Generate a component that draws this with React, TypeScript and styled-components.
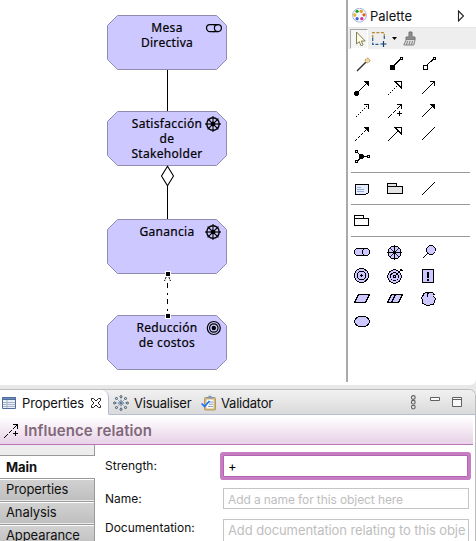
import React from "react";
import styled, { createGlobalStyle } from "styled-components";

const GlobalStyle = createGlobalStyle`
  * { box-sizing: border-box; }
  body { margin: 0; background: #e9e9e9; overflow: hidden; }
`;

const ui = `Inter, "Liberation Sans", sans-serif`;

const Window = styled.div`
  width: 476px;
  height: 541px;
  display: flex;
  flex-direction: column;
  overflow: hidden;
  background: #e8e8e8;
  font-family: ${ui};
  font-size: 13px;
  color: #111;
`;

const Editor = styled.section`
  height: 385px;
  flex: none;
  display: flex;
  background: #fff;
  border-bottom-right-radius: 6px;
`;

/* Diagram */

const Canvas = styled.div`
  position: relative;
  width: 346px;
  height: 385px;
`;

const Drawing = styled.svg`
  position: absolute;
  inset: 0;
`;

const NodeLabel = styled.div<{ $top: number }>`
  position: absolute;
  left: 107px;
  top: ${(p) => p.$top}px;
  width: 120px;
  text-align: center;
  white-space: pre-line;
  font-family: "Noto Sans", "Open Sans", sans-serif;
  font-size: 12px;
  line-height: 15px;
  letter-spacing: 0.32px;
  color: #000;
  -webkit-text-stroke: 0.2px #000;
`;

const LILAC = "#cdc8ff";

const NodeShape = ({ y }: { y: number }) => (
  <path
    d={`M117.5 ${y + 0.5}h99l10 10v34l-10 10h-99l-10-10v-34z`}
    fill={LILAC}
    stroke="#8f8cb2"
  />
);

const Wheel = ({ x, y }: { x: number; y: number }) => (
  <g transform={`translate(${x} ${y})`} stroke="#000" fill="none">
    <path d="M-8 0H8M0-8V8" strokeWidth="1.8" stroke="#55536a" />
    <circle r="6.2" strokeWidth="1.4" />
    <path d="M-5.4-5.4L5.4 5.4M5.4-5.4L-5.4 5.4" strokeWidth="1.2" />
    <circle r="1.9" fill="#000" />
  </g>
);

const Diagram = () => (
  <Canvas>
    <Drawing width="346" height="385">
      {[15, 111, 219, 315].map((y) => (
        <NodeShape key={y} y={y} />
      ))}
      <path d="M167.5 70V111M167.5 186V219" stroke="#000" />
      <path d="M167.5 166.3L173.5 176L167.5 185.7L161.5 176z" fill="#fff" stroke="#000" strokeWidth="1.1" />
      <path d="M167.5 283V315" stroke="#000" strokeDasharray="5 5 2 4" />
      <path d="M166.5 276L164.5 281M168.5 276L170.5 281" stroke="#000" strokeDasharray="3 1" />
      <path d="M165 271h6v6h-6zM165 313h6v6h-6z" fill="#fff" />
      <path d="M166 272h4v4h-4zM166 314h4v4h-4z" fill="#000" />
      <g fill="none" stroke="#000" strokeWidth="1.2">
        <path d="M214 24.6h-4a3.5 3.5 0 0 0 0 7h4" />
        <path d="M213 24.6h5M213 31.6h5" />
        <circle cx="217.9" cy="28.1" r="3.5" />
        <circle cx="213.8" cy="328" r="6.5" />
        <circle cx="213.8" cy="328" r="4.2" />
      </g>
      <circle cx="213.8" cy="328" r="2.2" />
      <Wheel x={213} y={124} />
      <Wheel x={213} y={232} />
    </Drawing>
    <NodeLabel $top={20}>{"Mesa\nDirectiva"}</NodeLabel>
    <NodeLabel $top={116}>{"Satisfacción\nde\nStakeholder"}</NodeLabel>
    <NodeLabel $top={224}>Ganancia</NodeLabel>
    <NodeLabel $top={320}>{"Reducción\nde costos"}</NodeLabel>
  </Canvas>
);

/* Palette */

const PalettePane = styled.aside`
  width: 130px;
  display: flex;
  flex-direction: column;
  height: 382px;
  border-left: 2px solid #aaa;
`;

const PaletteHeader = styled.header`
  height: 27px;
  flex: none;
  display: flex;
  align-items: center;
  padding: 4px 0 0 4px;
  font-size: 13px;
`;

const PaletteName = styled.span`
  flex: 1;
  padding-left: 3px;
`;

const PaletteArrow = styled.svg`
  flex: none;
  margin-right: 11px;
`;

const PaletteTools = styled.div`
  height: 22px;
  flex: none;
  display: flex;
  align-items: center;
  background: #eee;
  border-top: 1px solid #e6e6e6;
`;

const PointerTool = styled.div`
  width: 18px;
  height: 20px;
  margin-left: 2px;
  background: #f6f6f6;
  border: 1px solid #a8a8a8;
  border-right-color: #fff;
  border-bottom-color: #fff;
`;

const ToolIcon = styled.svg<{ $gap: number }>`
  flex: none;
  margin-left: ${(p) => p.$gap}px;
`;

const Drawer = styled.div<{ $top: number; $bottom: number }>`
  display: grid;
  grid-template-columns: 33px 34px 16px;
  grid-auto-rows: 16px;
  row-gap: 7px;
  margin: 0 6px 0 3px;
  padding: ${(p) => `${p.$top}px 0 ${p.$bottom}px 3px`};
  border-bottom: 1px solid #999;
  &:last-child { border-bottom: 0; }
`;

const Glyph = styled.svg`
  display: block;
  flex: none;
  overflow: visible;
`;

const Icon = ({ children }: { children?: React.ReactNode }) => (
  <Glyph width="16" height="16" viewBox="0 0 16 16" fill="none" stroke="#000" shapeRendering="crispEdges">
    {children}
  </Glyph>
);

type Head = "fill" | "open" | "hollow" | "none";

/* Diagonal relation arrow; `x` is the horizontal position of its tip. */
const Relation = ({ x, head, dash, tail = 13.5 }: { x: number; head: Head; dash?: string; tail?: number }) => (
  <>
    <path d={`M${x - tail + 1} ${tail + 0.5}L${head === "hollow" ? x - 3 : x} ${head === "hollow" ? 4.5 : 1.5}`} strokeDasharray={dash} />
    {head === "fill" && <path d={`M${x - 4} 1.5H${x}V5.5z`} fill="#000" />}
    {head === "open" && <path d={`M${x - 4.5} 1.5H${x}V6`} />}
    {head === "hollow" && <path d={`M${x - 6.5} 1.5H${x}V8z`} fill="#fff" />}
  </>
);

const InfluenceIcon = () => (
  <Icon>
    <Relation x={14.5} head="open" dash="5 1.4" tail={14.5} />
    <path d="M10 10.5h5M12.5 8v5" />
  </Icon>
);

const Relations = () => (
  <Drawer $top={8} $bottom={7}>
    <Icon>
      <path d="M3 14L12 5" stroke="#333" strokeWidth="1.4" shapeRendering="auto" />
      <circle cx="13.5" cy="3.5" r="2.3" fill="#eedba3" stroke="#ae8b45" strokeDasharray="2 1" shapeRendering="auto" />
    </Icon>
    <Icon>
      <rect x="3.5" y="8" width="4" height="4" fill="#000" />
      <path d="M7.5 8L13 2.5" /><rect x="13.5" y="0.5" width="2" height="2" fill="#fff" />
    </Icon>
    <Icon>
      <path d="M6 8L12 2.5" /><rect x="2.5" y="8" width="4" height="4" fill="#fff" />
      <rect x="12.5" y="0.5" width="2" height="2" fill="#fff" />
    </Icon>

    <Icon><Relation x={14.5} head="fill" /><circle cx="2.5" cy="13.5" r="2" fill="#000" /></Icon>
    <Icon><Relation x={14.5} head="hollow" dash="1.4 1.4" tail={14.5} /></Icon>
    <Icon><Relation x={13.5} head="open" /></Icon>

    <Icon><Relation x={14.5} head="open" dash="1.4 1.4" /></Icon>
    <InfluenceIcon />
    <Icon><Relation x={13.5} head="fill" tail={14} /></Icon>

    <Icon><Relation x={14.5} head="fill" dash="3 1.4" tail={14.5} /></Icon>
    <Icon><Relation x={14.5} head="hollow" tail={14.5} /></Icon>
    <Icon><Relation x={13.5} head="none" /></Icon>

    <Icon>
      <path d="M3 3L8 7.5L3 12.5M8 7.5H14" />
      <circle cx="7.7" cy="7.5" r="2" fill="#000" />
      <path d="M1.5 1.5h2v2h-2zM1.5 11.5h2v2h-2zM13.5 6.5h2v2h-2z" fill="#fff" />
    </Icon>
  </Drawer>
);

const Notes = () => (
  <Drawer $top={8} $bottom={7}>
    <Icon>
      <path d="M1.5 3.5h13v8l-3 2h-10z" fill="#e6edff" />
      <path d="M3 6.5h4M3 8.5h7M3 10.5h7" stroke="#98aad5" />
    </Icon>
    <Icon><path d="M.5 12.5V2.5h9v3H15.5v7zM.5 5.5h9" fill="#e4e4e4" /></Icon>
    <Icon><Relation x={13.5} head="none" /></Icon>
  </Drawer>
);

const Groups = () => (
  <Drawer $top={7} $bottom={8}>
    <Icon><path d="M.5 13.5V3.5h9v3h5v7zM.5 6.5h9" fill="#fff" /></Icon>
  </Drawer>
);

const Elements = () => (
  <Drawer $top={7} $bottom={0}>
    <Icon>
      <rect x="0.5" y="4.5" width="15" height="7" rx="3.5" fill={LILAC} />
      <circle cx="12" cy="8" r="3.5" />
    </Icon>
    <Icon>
      <circle cx="7.5" cy="8.5" r="6.5" fill={LILAC} />
      <path d="M7.5 1v15M0 8.5h15" />
      <path d="M3 4l9 9M12 4l-9 9" strokeWidth="0.8" shapeRendering="auto" />
      <circle cx="7.5" cy="8.5" r="1" fill="#000" />
    </Icon>
    <Icon>
      <path d="M2 14L7 9" /><circle cx="10" cy="6" r="4.3" fill={LILAC} />
    </Icon>

    <Icon>
      <circle cx="7.5" cy="8.5" r="7" fill={LILAC} /><circle cx="7.5" cy="8.5" r="4.2" />
      <path d="M6 8.5h3M7.5 7v3" />
    </Icon>
    <Icon>
      <circle cx="7.5" cy="9.5" r="6.8" fill={LILAC} /><circle cx="7.5" cy="9.5" r="4" />
      <circle cx="7.5" cy="9.5" r="1" /><path d="M8 9L15 2M13.5 2v1.5h2" />
    </Icon>
    <Icon>
      <rect x="1.5" y="2.5" width="11" height="13" rx="1" fill={LILAC} />
      <path d="M7 5v6M7 12v2" strokeWidth="2" />
    </Icon>

    <Icon><path d="M4.5 4.5h11l-4 8h-11z" fill={LILAC} /></Icon>
    <Icon><path d="M4.5 4.5h11l-4 8h-11zM8.5 4.5l-4 8" fill={LILAC} /></Icon>
    <Icon>
      <path
        d="M7 3.7C6 1.8 2.2 2.2 2.5 5.2C.2 6 .3 9.3 2 10C.2 12 2 14.8 4.5 14.2C5.5 16 8.5 16 9.2 14.5C11.8 15.6 14.3 13.5 13 11C14.8 9.5 14.5 7.5 12.8 6.8C14 3.5 11.5 1.8 9.5 2.6C8.5 2.2 7.5 2.6 7 3.7z"
        fill={LILAC}
      />
      <path d="M6.5 4v2.5" />
    </Icon>

    <Icon><ellipse cx="8" cy="8.5" rx="7.5" ry="5.5" fill={LILAC} /></Icon>
  </Drawer>
);

const paints: [number, number, string][] = [
  [5.1, 3.3, "#26a02b"], [9.3, 3.3, "#e1a01b"], [12, 6.8, "#e85d22"], [9.8, 10.7, "#cf398c"],
  [5.1, 10.7, "#4867cd"], [2.8, 7, "#e6b52a"],
];

const Palette = () => (
  <PalettePane>
    <PaletteHeader>
      <svg width="15" height="15" viewBox="0 0 15 15">
        <circle cx="7.5" cy="7.2" r="6.9" fill="#f5f8ff" stroke="#a8b7dd" />
        {paints.map(([x, y, c]) => <circle key={c} cx={x} cy={y} r="1.65" fill={c} />)}
      </svg>
      <PaletteName>Palette</PaletteName>
      <PaletteArrow width="8" height="12" viewBox="0 0 8 12">
        <path d="M1.5 1L6.5 6L1.5 11z" fill="#fff" stroke="#222" strokeWidth="1.1" />
      </PaletteArrow>
    </PaletteHeader>
    <PaletteTools>
      <PointerTool>
        <svg width="16" height="18" viewBox="0 0 16 18">
          <path d="M5.5 2v12l2.8-2.3l1.7 4l2-.8l-1.7-3.9h3.9z" fill="#fffce9" stroke="#85804f" />
        </svg>
      </PointerTool>
      <ToolIcon $gap={4} width="15" height="16" viewBox="0 0 15 16" fill="none">
        <path d="M.7 7V1.7H12.3V7" stroke="#b08a35" strokeWidth="1.2" strokeDasharray="3 1.5" />
        <path d="M.7 7V13.3H8M12.3 5V9" stroke="#1f5d9a" strokeWidth="1.2" strokeDasharray="3 1.5" />
        <path d="M11.5 10v6M8.5 13h6" stroke="#153b70" strokeWidth="1.2" />
      </ToolIcon>
      <ToolIcon $gap={5} width="5" height="4" viewBox="0 0 5 4"><path d="M0 0h5L2.5 3z" /></ToolIcon>
      <ToolIcon $gap={6} width="14" height="16" viewBox="0 0 14 16">
        <path d="M6 1v5H3v3h9V6H9V1z" fill="#8f8f8f" stroke="#737373" />
        <path d="M3 9L.8 14h10L12 9M4.5 10l-1 4M7 10l-1 4M9.5 10l-1 4" fill="#ddd" stroke="#858585" />
      </ToolIcon>
    </PaletteTools>
    <Relations />
    <Notes />
    <Groups />
    <Elements />
  </PalettePane>
);

/* Properties view */

const View = styled.section`
  width: 476px;
  height: 152px;
  margin-top: 4px;
  display: flex;
  flex-direction: column;
  flex: none;
  background: #fff;
  border: 1px solid #bdbdbd;
  border-width: 1px 1px 0 0;
  border-top-right-radius: 7px;
  overflow: hidden;
`;

const TabBar = styled.div`
  height: 25px;
  flex: none;
  display: flex;
  background: linear-gradient(#f1f1f1, #d9d9d9);
`;

const Tab = styled.div<{ $active?: boolean; $width: number }>`
  width: ${(p) => p.$width}px;
  display: flex;
  align-items: center;
  gap: ${(p) => (p.$active ? 6 : 5)}px;
  padding-left: ${(p) => (p.$active ? 2 : 4)}px;
  padding-top: 2px;
  background: ${(p) => (p.$active ? "#fff" : "transparent")};
  border-right: ${(p) => (p.$active ? "1px solid #b2b9d6" : "0")};
  border-bottom: 1px solid ${(p) => (p.$active ? "#fff" : "#b7bdd5")};
  border-top-right-radius: ${(p) => (p.$active ? 7 : 0)}px;
  letter-spacing: ${(p) => (p.$active ? -0.12 : -0.22)}px;
  svg { flex: none; }
`;

const ViewControls = styled.div`
  flex: 1;
  border-bottom: 1px solid #b7bdd5;
  display: flex;
  justify-content: flex-end;
  padding: 4px 12px 0 0;
`;

const TitleBar = styled.div`
  height: 30px;
  flex: none;
  margin-right: 2px;
  display: flex;
  align-items: center;
  gap: 5px;
  padding: 3px 0 0 3px;
  background: linear-gradient(#fff 5%, #e9d3e8 95%);
  border-bottom: 1px solid #b878b5;
`;

const Title = styled.h1`
  margin: 0;
  font-size: 15px;
  line-height: 18px;
  font-weight: 600;
  letter-spacing: 0.1px;
  color: #80687a;
`;

const ViewBody = styled.div`
  flex: 1;
  display: flex;
  min-height: 0;
`;

const SideTabs = styled.nav`
  width: 95px;
  flex: none;
  padding-top: 10px;
  background: #ededed;
  background-image: linear-gradient(#999, #999);
  background-size: 1px 10px;
  background-position: right top;
  background-repeat: no-repeat;
`;

const SideTab = styled.div<{ $active?: boolean }>`
  height: 23px;
  padding-left: 6px;
  line-height: ${(p) => (p.$active ? 22 : 21)}px;
  border-top: 1px solid #999;
  border-right: ${(p) => (p.$active ? "0" : "1px solid #999")};
  background: ${(p) => (p.$active ? "#fff" : "linear-gradient(#fff 0 1px, #d1d1d1 1px, #bfbfbf 21px, #ececec 21px)")};
  font-weight: ${(p) => (p.$active ? 700 : 400)};
  letter-spacing: -0.1px;
`;

const Form = styled.div`
  flex: 1;
  min-width: 0;
  display: flex;
  flex-direction: column;
  padding: 7px 3px 0 10px;
`;

const Field = styled.div<{ $height: number }>`
  display: flex;
  flex: none;
  height: ${(p) => p.$height}px;
`;

const Label = styled.label<{ $top: number }>`
  width: 115px;
  flex: none;
  padding-top: ${(p) => p.$top}px;
  font-size: 12px;
  line-height: 16px;
`;

const Input = styled.div<{ $focus?: boolean; $height: number; $line: number; $size: number }>`
  height: ${(p) => p.$height}px;
  width: ${(p) => (p.$focus ? 245 : 246)}px;
  margin: ${(p) => (p.$focus ? "3px 3px 0 3px" : "0 3px")};
  padding-left: 4px;
  border: 1px solid ${(p) => (p.$focus ? "#b265ae" : "#c5c5c5")};
  box-shadow: ${(p) => (p.$focus ? "0 0 0 3px #c77dc3" : "none")};
  border-radius: ${(p) => (p.$focus ? 1 : 0)}px;
  font-size: ${(p) => p.$size}px;
  line-height: ${(p) => p.$line}px;
  color: ${(p) => (p.$focus ? "#000" : "#bebebe")};
  background: #fff;
  white-space: nowrap;
  overflow: hidden;
  letter-spacing: -0.1px;
`;

const ringDots = Array.from({ length: 8 }, (_, i) => (i * Math.PI) / 4);

const PropertiesView = () => (
  <View>
    <TabBar>
      <Tab $active $width={109}>
        <svg width="14" height="14" viewBox="0 0 14 14">
          <path d="M.5 1.5h13v11H.5z" fill="#edf2fa" stroke="#526d9a" />
          <path d="M.5 1.5h13v2H.5z" fill="#6a8dbd" stroke="#526d9a" />
          <path d="M5 4v8M1 6.5h12M1 8.5h12M1 10.5h12" stroke="#a6b3c8" />
        </svg>
        <span>Properties</span>
        <svg width="12" height="12" viewBox="0 0 12 12">
          <path d="M1.5 1.5h2L6 4l2.5-2.5h2v2L8 6l2.5 2.5v2h-2L6 8l-2.5 2.5h-2v-2L4 6L1.5 3.5z" fill="#fff" stroke="#222" />
        </svg>
      </Tab>
      <Tab $width={88}>
        <svg width="16" height="16" viewBox="0 0 16 16">
          <circle cx="8" cy="8" r="1.7" fill="#5b789e" />
          {ringDots.map((a) => (
            <g key={a} transform={`translate(${8 + Math.cos(a) * 6.4} ${8 + Math.sin(a) * 6.4})`}>
              <circle r="1.05" fill="#cbd9e8" stroke="#2c4053" strokeWidth="0.8" />
            </g>
          ))}
          {ringDots.map((a) => (
            <path key={a} d={`M${8 + Math.cos(a) * 2} ${8 + Math.sin(a) * 2}L${8 + Math.cos(a) * 4.5} ${8 + Math.sin(a) * 4.5}`} stroke="#47627f" strokeDasharray="1.2 .8" />
          ))}
        </svg>
        <span>Visualiser</span>
      </Tab>
      <Tab $width={85}>
        <svg width="15" height="16" viewBox="0 0 15 16">
          <rect x="3.5" y="2.5" width="11" height="12.5" rx="1" fill="#d8b978" stroke="#b39861" />
          <path d="M5.5 4.5h7v9h-7z" fill="#f8fbff" />
          <path d="M5.5 3.5v-1.5h2V.8h3V2h2v1.5z" fill="#8195b3" />
          <path d="M8 7h4M8 9.2h4M7 11.5h5" stroke="#88a2c6" />
          <path d="M.7 8.5L3.5 11.5L8.5 6" fill="none" stroke="#1d73f1" strokeWidth="1.8" />
        </svg>
        <span>Validator</span>
      </Tab>
      <ViewControls>
        <svg width="54" height="18" viewBox="0 0 54 18" fill="none" stroke="#606060">
          <g strokeWidth="1.1"><circle cx="4.3" cy="3.5" r="1.9" /><circle cx="4.3" cy="8.3" r="1.9" /><circle cx="4.3" cy="13.1" r="1.9" /></g>
          <path d="M21.5 3.5h9v3h-9zM43.5 3.5h9v9h-9zM43.5 5.5h9" fill="#fafafa" />
        </svg>
      </ViewControls>
    </TabBar>
    <TitleBar>
      <InfluenceIcon />
      <Title>Influence relation</Title>
    </TitleBar>
    <ViewBody>
      <SideTabs>
        <SideTab $active>Main</SideTab>
        <SideTab>Properties</SideTab>
        <SideTab>Analysis</SideTab>
        <SideTab>Appearance</SideTab>
      </SideTabs>
      <Form>
        <Field $height={36}><Label $top={6}>Strength:</Label><Input $focus $height={22} $line={21} $size={13}>+</Input></Field>
        <Field $height={31}><Label $top={3}>Name:</Label><Input $height={21} $line={21} $size={12}>Add a name for this object here</Input></Field>
        <Field $height={30}><Label $top={1}>Documentation:</Label><Input $height={30} $line={20} $size={13}>Add documentation relating to this obje</Input></Field>
      </Form>
    </ViewBody>
  </View>
);

export default function App() {
  return (
    <>
      <GlobalStyle />
      <Window>
        <Editor>
          <Diagram />
          <Palette />
        </Editor>
        <PropertiesView />
      </Window>
    </>
  );
}
